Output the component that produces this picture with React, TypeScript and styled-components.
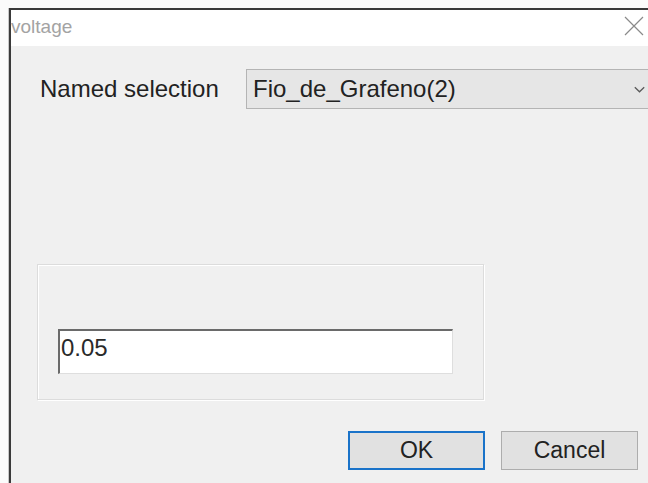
import styled, { createGlobalStyle } from "styled-components";

const GlobalStyle = createGlobalStyle`
  html, body {
    margin: 0;
    padding: 0;
    background: #fbfbfb;
    overflow: hidden;
  }
  body {
    font-family: "Liberation Sans", Arial, sans-serif;
  }
`;

const Window = styled.div`
  margin: 8px 0 0 9px;
  width: 639px;
  height: 490px;
  border-top: 2px solid #3a3a3a;
  border-left: 2px solid #3a3a3a;
  box-shadow: -1px 0 0 #c8c8c8;
  display: flex;
  flex-direction: column;
  background: #f0f0f0;
`;

const TitleBar = styled.div`
  height: 36px;
  background: #ffffff;
  display: flex;
  align-items: center;
  justify-content: space-between;
  padding: 0 2px 0 0;
`;

const Title = styled.span`
  font-size: 19px;
  color: #a3a3a3;
  margin-top: -2px;
`;

const CloseButton = styled.button`
  width: 28px;
  height: 28px;
  border: none;
  background: none;
  padding: 0;
  display: flex;
  align-items: center;
  justify-content: center;
  margin-top: -4px;
`;

const Content = styled.div`
  flex: 1;
  display: flex;
  flex-direction: column;
  padding: 23px 0 0 0;
`;

const FieldRow = styled.div`
  display: flex;
  align-items: center;
  height: 40px;
`;

const Label = styled.span`
  font-size: 24px;
  color: #222222;
  margin-left: 29px;
  width: 206px;
  margin-top: -1px;
`;

const Select = styled.div`
  flex: 1;
  height: 40px;
  box-sizing: border-box;
  border: 1px solid #b4b4b4;
  border-right: none;
  background: #e6e6e6;
  display: flex;
  align-items: center;
  justify-content: space-between;
  padding: 0 5px 0 6px;
  font-size: 24px;
  color: #222222;
`;

const GroupBox = styled.div`
  margin: 155px 0 0 26px;
  width: 447px;
  height: 136px;
  box-sizing: border-box;
  border: 1px solid #dcdcdc;
  box-shadow: inset 1px 1px 0 #ffffff, 1px 1px 0 #ffffff;
  padding: 64px 0 0 20px;
`;

const ValueInput = styled.div`
  width: 395px;
  height: 45px;
  box-sizing: border-box;
  background: #ffffff;
  border-top: 2px solid #6a6a6a;
  border-left: 2px solid #6a6a6a;
  border-right: 1px solid #dedede;
  border-bottom: 1px solid #dedede;
  font-size: 24px;
  color: #2a2a2a;
  padding: 3px 0 0 1px;
`;

const ButtonRow = styled.div`
  display: flex;
  gap: 16px;
  margin: 31px 0 0 337px;
`;

const DialogButton = styled.button<{ $primary?: boolean }>`
  width: 137px;
  height: 39px;
  box-sizing: border-box;
  background: #e1e1e1;
  border: ${({ $primary }) => ($primary ? "2px solid #1a73c9" : "1px solid #adadad")};
  font-family: "Liberation Sans", Arial, sans-serif;
  font-size: 23px;
  color: #222222;
  padding: 0;
`;

export default function App() {
  return (
    <>
      <GlobalStyle />
      <Window>
        <TitleBar>
          <Title>voltage</Title>
          <CloseButton>
            <svg width="20" height="20" viewBox="0 0 20 20">
              <path d="M1 1 L19 19 M19 1 L1 19" stroke="#8a8a8a" strokeWidth="1.2" fill="none" />
            </svg>
          </CloseButton>
        </TitleBar>
        <Content>
          <FieldRow>
            <Label>Named selection</Label>
            <Select>
              <span>Fio_de_Grafeno(2)</span>
              <svg width="11" height="7" viewBox="0 0 11 7">
                <path d="M0.8 1.2 L5.5 5.8 L10.2 1.2" stroke="#5a5a5a" strokeWidth="1.3" fill="none" />
              </svg>
            </Select>
          </FieldRow>
          <GroupBox>
            <ValueInput>0.05</ValueInput>
          </GroupBox>
          <ButtonRow>
            <DialogButton $primary>OK</DialogButton>
            <DialogButton>Cancel</DialogButton>
          </ButtonRow>
        </Content>
      </Window>
    </>
  );
}
